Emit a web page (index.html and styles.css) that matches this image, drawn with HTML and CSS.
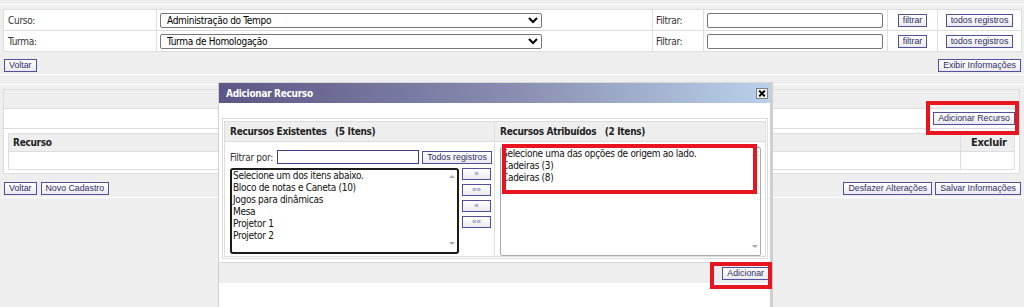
FILE: index.html
```html
<!DOCTYPE html>
<html lang="pt-BR">
<head>
    <meta charset="UTF-8">
    <meta name="viewport" content="width=device-width, initial-scale=1.0">
    <title>Recursos da Turma</title>
    <link rel="stylesheet" href="styles.css">
</head>
<body>
    <div class="strip"></div>
    <table class="filters">
        <colgroup>
            <col class="c-label"><col class="c-select"><col class="c-flabel"><col class="c-input"><col class="c-btn"><col class="c-all">
        </colgroup>
        <tr>
            <td class="label">Curso:</td>
            <td><select class="combo"><option>Administração do Tempo</option></select></td>
            <td>Filtrar:</td>
            <td><input type="text" class="text"></td>
            <td class="center"><button class="btn">filtrar</button></td>
            <td class="center"><button class="btn">todos registros</button></td>
        </tr>
        <tr>
            <td class="label">Turma:</td>
            <td><select class="combo"><option>Turma de Homologação</option></select></td>
            <td>Filtrar:</td>
            <td><input type="text" class="text"></td>
            <td class="center"><button class="btn">filtrar</button></td>
            <td class="center"><button class="btn">todos registros</button></td>
        </tr>
    </table>
    <div class="toolbar">
        <div class="group"><button class="btn">Voltar</button></div>
        <div class="group"><button class="btn">Exibir Informações</button></div>
    </div>
    <div class="spacer"></div>
    <div class="panel">
        <div class="panel-head"></div>
        <div class="panel-actions"><button class="btn">Adicionar Recurso</button></div>
        <div class="panel-body">
            <table class="grid">
                <tr><th>Recurso</th><th class="col-del">Excluir</th></tr>
                <tr><td></td><td></td></tr>
            </table>
        </div>
    </div>
    <div class="toolbar lower">
        <div class="group">
            <button class="btn">Voltar</button>
            <button class="btn">Novo Cadastro</button>
        </div>
        <div class="group">
            <button class="btn">Desfazer Alterações</button>
            <button class="btn">Salvar Informações</button>
        </div>
    </div>

    <div class="dialog">
        <div class="dialog-title">
            <span>Adicionar Recurso</span>
            <span class="close">
                <svg width="12" height="11" viewBox="0 0 12 11"><rect x="0.5" y="0.5" width="11" height="10" fill="#f0f0f0" stroke="#808080"/><path d="M3.2 2.6 L8.8 8.4 M8.8 2.6 L3.2 8.4" stroke="#000" stroke-width="2"/></svg>
            </span>
        </div>
        <div class="dialog-body">
            <div class="picker">
                <div class="picker-col">
                    <div class="picker-head">Recursos Existentes&nbsp;&nbsp;&nbsp;(5 Itens)</div>
                    <div class="picker-body">
                        <div class="filter-row">
                            <span class="filter-label">Filtrar por:</span>
                            <input type="text" class="text dark">
                            <button class="btn">Todos registros</button>
                        </div>
                        <div class="list-row">
                            <div class="listbox focused">
                                <div class="options">
                                    <div>Selecione um dos itens abaixo.</div>
                                    <div>Bloco de notas e Caneta (10)</div>
                                    <div>Jogos para dinâmicas</div>
                                    <div>Mesa</div>
                                    <div>Projetor 1</div>
                                    <div>Projetor 2</div>
                                </div>
                                <div class="scroll"><span class="arrow-up"></span><span class="arrow-down"></span></div>
                            </div>
                            <div class="movers">
                                <button class="btn mover">»</button>
                                <button class="btn mover">»»</button>
                                <button class="btn mover">«</button>
                                <button class="btn mover">««</button>
                            </div>
                        </div>
                    </div>
                </div>
                <div class="picker-col">
                    <div class="picker-head">Recursos Atribuídos&nbsp;&nbsp;&nbsp;(2 Itens)</div>
                    <div class="picker-body right">
                        <div class="listbox tall">
                            <div class="options">
                                <div>Selecione uma das opções de origem ao lado.</div>
                                <div>Cadeiras (3)</div>
                                <div>Cadeiras (8)</div>
                            </div>
                            <div class="scroll"><span class="arrow-up"></span><span class="arrow-down"></span></div>
                        </div>
                    </div>
                </div>
            </div>
            <div class="dialog-foot"><button class="btn">Adicionar</button></div>
        </div>
    </div>

    <span class="mark mark-button"></span>
    <span class="mark mark-list"></span>
    <span class="mark mark-add"></span>
</body>
</html>
```

FILE: styles.css
```css
body {
    margin: 0;
    height: 307px;
    overflow: hidden;
    position: relative;
    background: #eeeeee;
    color: #333333;
    font-family: "DejaVu Sans Condensed", "DejaVu Sans", sans-serif;
    font-stretch: condensed;
    font-size: 10px;
    letter-spacing: -0.3px;
}
.strip {
    height: 4px;
    border-bottom: 1px solid #ffffff;
    margin-bottom: 4px;
}
.filters {
    width: 1018px;
    margin-left: 3px;
    border-collapse: collapse;
    table-layout: fixed;
    background: #ffffff;
}
.c-label { width: 153px; }
.c-select { width: 496px; }
.c-flabel { width: 51px; }
.c-input { width: 184px; }
.c-btn { width: 50px; }
.c-all { width: 84px; }
.filters td {
    height: 20px;
    padding: 0 0 0 3px;
    border: 1px solid #dedede;
    white-space: nowrap;
    vertical-align: middle;
}
.filters td.label {
    padding-left: 4px;
}
.filters td.center {
    padding: 0;
    text-align: center;
}
.combo {
    display: block;
    width: 382px;
    height: 15px;
    padding: 0 0 0 2px;
    border: 1px solid #767676;
    border-radius: 2px;
    background: #ffffff;
    color: #000000;
    font-family: inherit;
    font-size: 10px;
    letter-spacing: -0.3px;
}
.text {
    display: block;
    box-sizing: border-box;
    width: 176px;
    height: 15px;
    padding: 0 2px;
    border: 1px solid #767676;
    border-radius: 2px;
    background: #ffffff;
    font-family: inherit;
    font-size: 10px;
}
.btn {
    box-sizing: border-box;
    height: 13px;
    padding: 0 4px;
    border: 1px solid #4f4f9c;
    border-radius: 0;
    background: linear-gradient(#ffffff, #eaeaee);
    color: #2f2f66;
    font-family: "Liberation Sans", Arial, sans-serif;
    font-size: 8.8px;
    letter-spacing: 0;
    line-height: 11px;
    white-space: nowrap;
    cursor: pointer;
}
.toolbar {
    display: flex;
    justify-content: space-between;
    padding: 7px 3px 2px 4px;
    border-bottom: 1px solid #ffffff;
}
.toolbar.lower {
    padding-top: 8px;
}
.group {
    display: flex;
    gap: 4px;
}
.toolbar.lower .group:last-child {
    gap: 3px;
}
.spacer {
    height: 9px;
    border-bottom: 1px solid #ffffff;
    margin-bottom: 4px;
}
.panel {
    margin: 0 4px 0 3px;
    border: 1px solid #dddddd;
    background: #ffffff;
}
.panel-head {
    height: 18px;
    background: #eeeeee;
    border-bottom: 1px solid #dddddd;
}
.panel-actions {
    height: 19px;
    display: flex;
    justify-content: flex-end;
    align-items: center;
    padding-right: 4px;
    border-bottom: 1px solid #dddddd;
}
.panel-body {
    padding: 4px 4px 3px;
}
.grid {
    width: 100%;
    border-collapse: collapse;
}
.grid th, .grid td {
    height: 17px;
    padding: 0 4px;
    border: 1px solid #dddddd;
    text-align: left;
}
.grid th {
    background: #eeeeee;
    color: #222222;
    font-weight: bold;
}
.grid th.col-del {
    width: 43px;
    font-size: 11px;
    padding: 0 0 0 10px;
}

/* dialog */
.dialog {
    position: absolute;
    left: 218px;
    top: 82px;
    bottom: 0;
    width: 551px;
    border-left: 1px solid #d0d0d0;
    border-top: 1px solid #d8d8d8;
    border-right: 3px solid #cfcfcf;
    background: #ffffff;
}
.dialog-title {
    height: 20px;
    display: flex;
    justify-content: space-between;
    align-items: center;
    padding: 0 2px 0 7px;
    background: linear-gradient(to right, #5c5786, #8a8fb2 55%, #b9d1ea);
    color: #ffffff;
    font-weight: bold;
}
.close {
    display: flex;
}
.dialog-body {
    padding-top: 15px;
}
.picker {
    display: grid;
    grid-template-columns: 271px 271px;
    margin: 0 2px 0 3px;
    padding: 2px 1px 1px;
    border: 1px solid #dddddd;
}
.picker-col {
    display: flex;
    flex-direction: column;
    border: 1px solid #dddddd;
}
.picker-col + .picker-col {
    border-left: none;
}
.picker-head {
    height: 19px;
    line-height: 19px;
    padding-left: 5px;
    background: #eeeeee;
    border-bottom: 1px solid #dddddd;
    color: #222222;
    font-weight: bold;
    white-space: nowrap;
}
.picker-body {
    flex: 1;
    padding: 8px 2px 2px 5px;
}
.picker-body.right {
    padding: 5px 3px 0 5px;
}
.filter-row {
    display: flex;
    align-items: center;
    height: 14px;
}
.filter-label {
    width: 47px;
}
.text.dark {
    width: 142px;
    height: 14px;
    border: 1px solid #3d3d8c;
    border-radius: 0;
}
.filter-row .btn {
    margin-left: 3px;
    width: 70px;
}
.list-row {
    display: flex;
    gap: 3px;
    margin-top: 4px;
}
.listbox {
    box-sizing: border-box;
    display: flex;
    width: 229px;
    height: 86px;
    border: 1px solid #a9a9a9;
    border-radius: 2px;
    background: #ffffff;
    color: #111111;
    line-height: 12px;
}
.listbox.focused {
    border: 2px solid #1c1c1c;
    border-radius: 3px;
}
.listbox.tall {
    width: 261px;
    height: 109px;
}
.options {
    flex: 1;
    padding-left: 1px;
    white-space: nowrap;
}
.scroll {
    display: flex;
    flex-direction: column;
    justify-content: space-between;
    align-items: center;
    width: 11px;
    padding: 5px 0 7px;
}
.arrow-up {
    border-left: 3px solid transparent;
    border-right: 3px solid transparent;
    border-bottom: 3px solid #a8a8a8;
}
.arrow-down {
    border-left: 3px solid transparent;
    border-right: 3px solid transparent;
    border-top: 3px solid #a8a8a8;
}
.movers {
    display: flex;
    flex-direction: column;
    gap: 4px;
}
.btn.mover {
    width: 29px;
    height: 12px;
    padding: 0;
    color: #6c6ca6;
    font-size: 8px;
    line-height: 10px;
}
.dialog-foot {
    display: flex;
    justify-content: flex-end;
    margin-top: 3px;
    height: 19px;
    padding: 4px 1px 0 0;
    box-sizing: border-box;
    border-top: 1px solid #d8d8d8;
    background: #eeeeee;
    height: 21px;
}

/* annotation boxes */
.mark {
    position: absolute;
    box-sizing: border-box;
    border: 4px solid #e8141f;
}
.mark-button {
    left: 926px;
    top: 101px;
    width: 93px;
    height: 34px;
}
.mark-list {
    left: 502px;
    top: 144px;
    width: 255px;
    height: 50px;
}
.mark-add {
    left: 710px;
    top: 262px;
    width: 62px;
    height: 27px;
}
```
